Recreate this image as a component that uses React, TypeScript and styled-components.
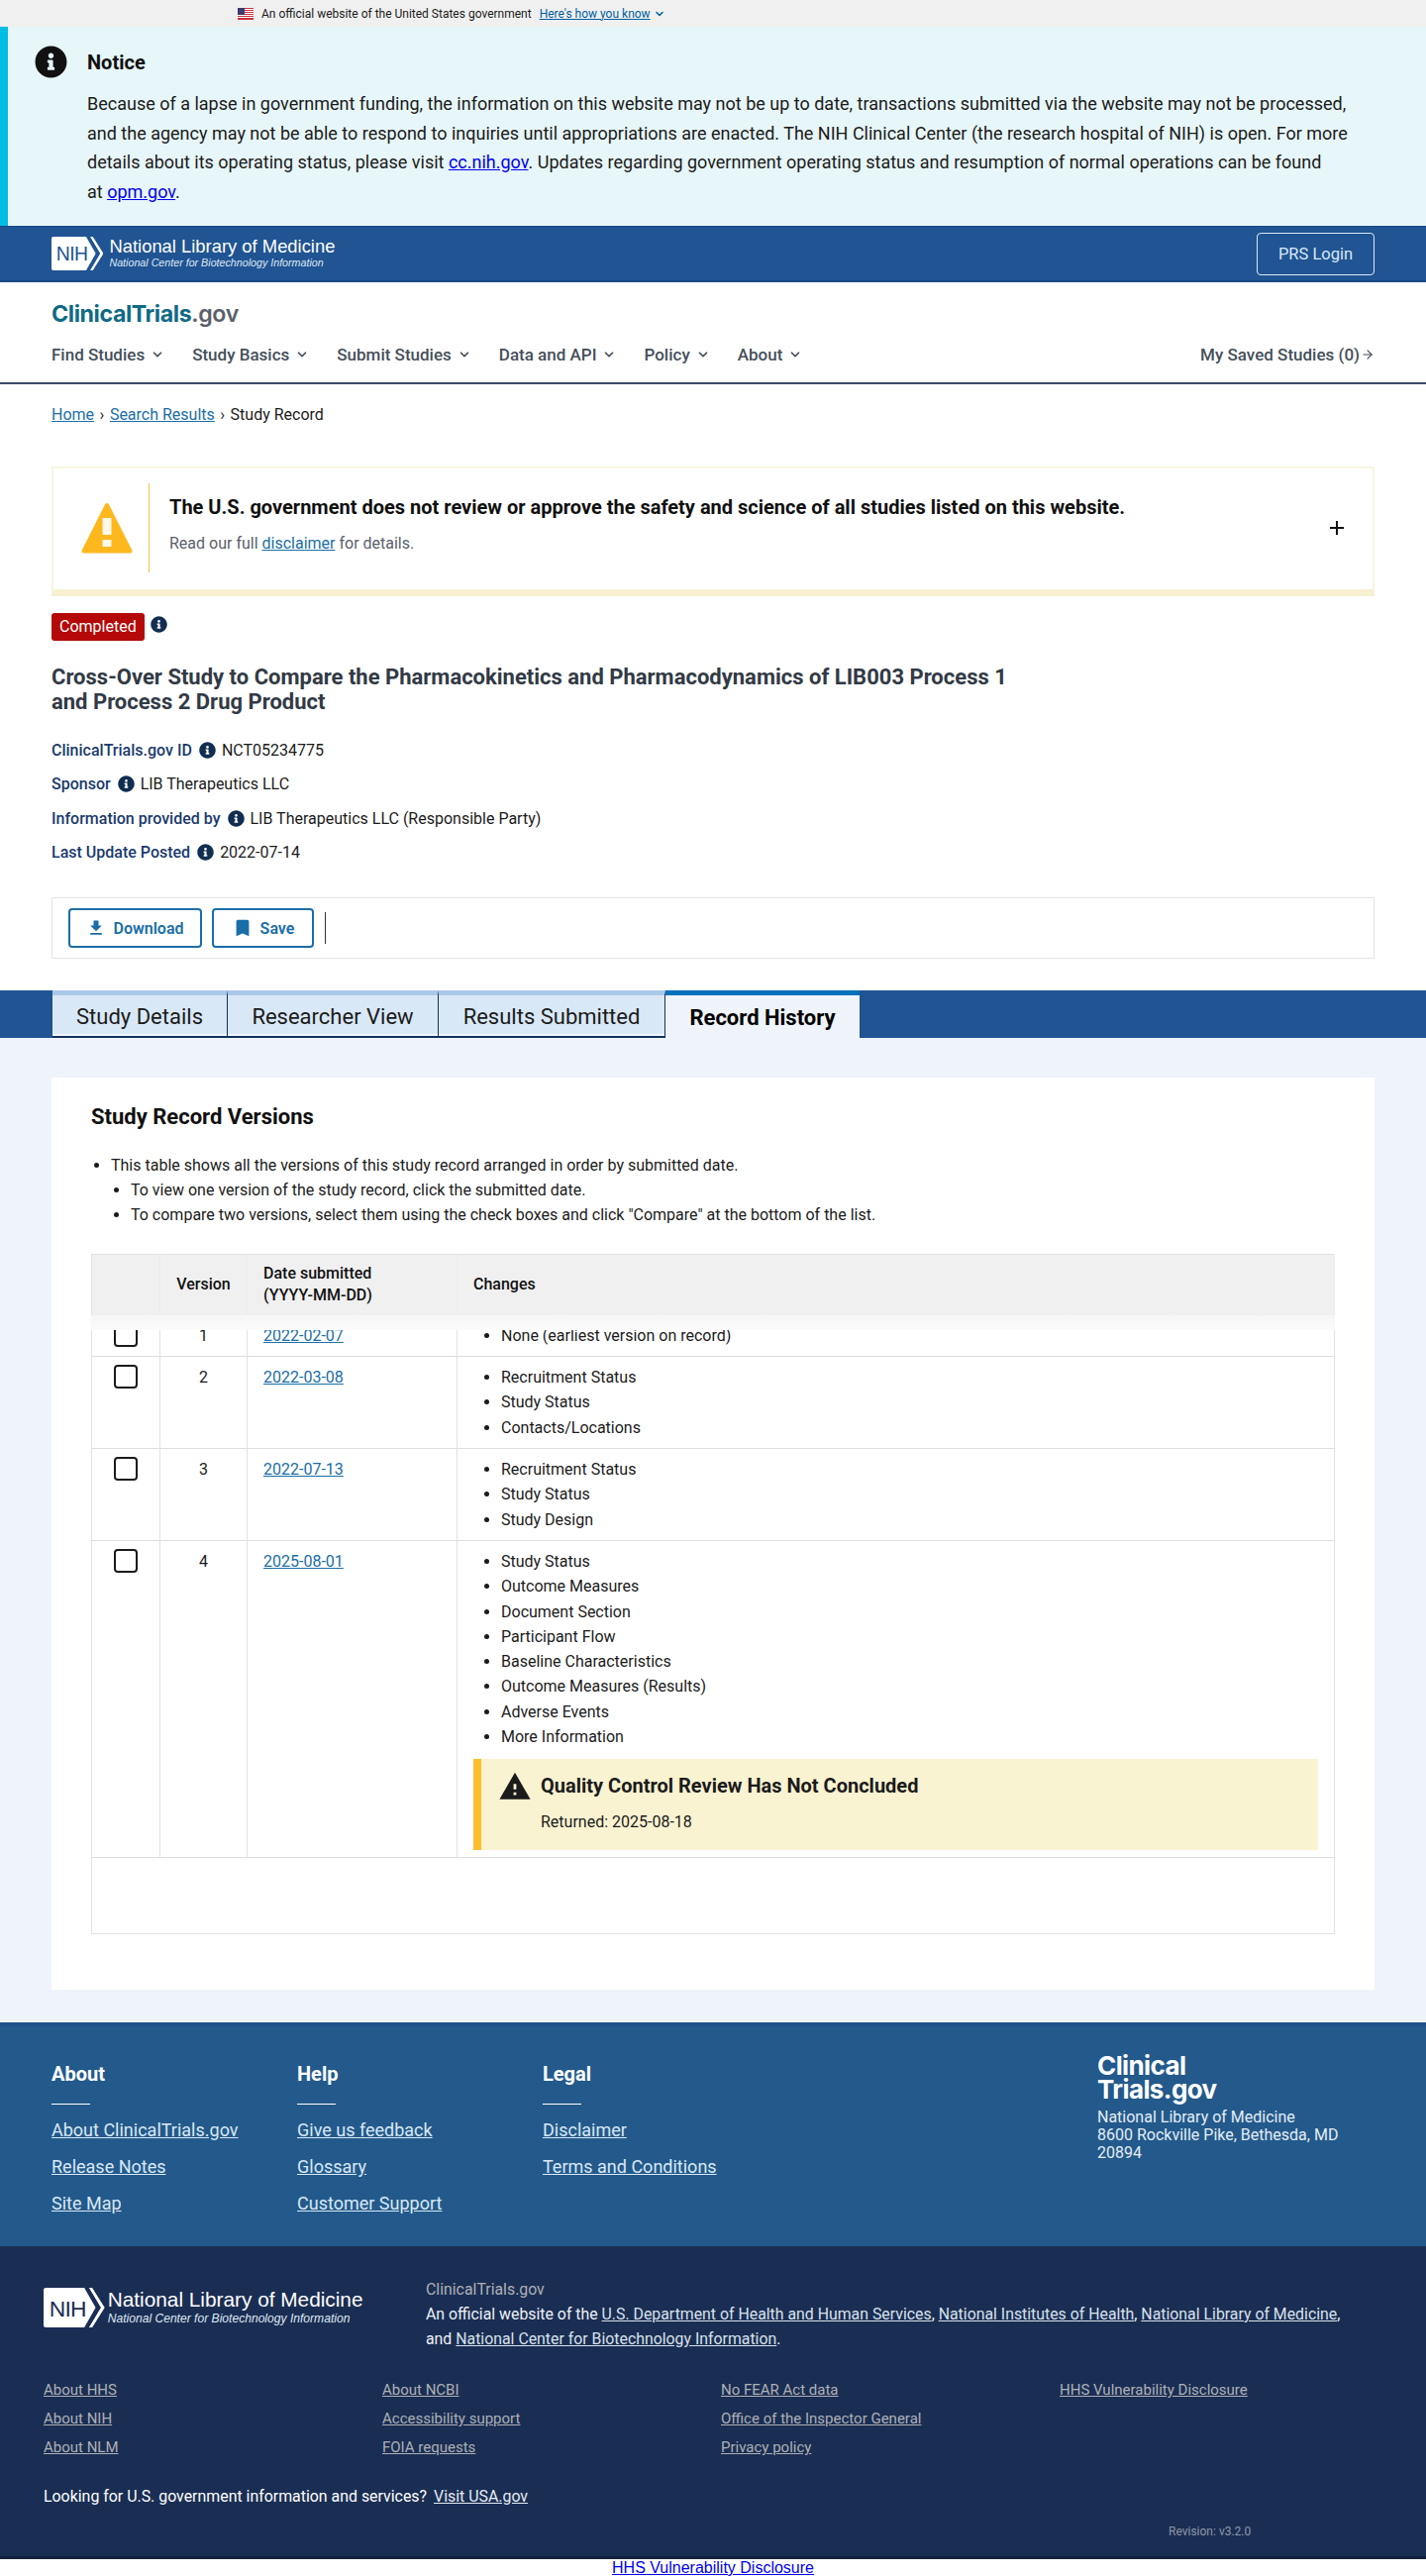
import React from "react";
import styled, { createGlobalStyle } from "styled-components";
import { FaInfoCircle } from "react-icons/fa";
import { MdFileDownload, MdBookmark, MdWarning, MdAdd } from "react-icons/md";
import { ArrowRight, ChevronDown } from "lucide-react";

const GlobalStyle = createGlobalStyle`
  html, body {
    margin: 0;
    padding: 0;
    background: #fff;
    font-family: Roboto, "Liberation Sans", sans-serif;
    font-size: 16px;
    color: #1b1b1b;
  }
  * { box-sizing: border-box; }
`;

const GovBanner = styled.div`
  height: 27px;
  background: #f0f0f0;
  padding-left: 240px;
  display: flex;
  align-items: center;
  gap: 8px;
  font-size: 12px;
  color: #1b1b1b;
`;

const GovLink = styled.a`
  color: #005ea2;
  text-decoration: underline;
  display: inline-flex;
  align-items: center;
  gap: 3px;
  text-underline-offset: 1px;
`;

const Notice = styled.section`
  height: 201px;
  background: #e7f6f8;
  border-left: 8px solid #00bde3;
  padding: 19px 70px 0 27px;
  display: flex;
  gap: 20px;
`;

const NoticeIcon = styled(FaInfoCircle)`
  width: 33px;
  height: 33px;
  flex: none;
  color: #111;
`;

const NoticeTitle = styled.h4`
  margin: 5px 0 15px;
  font-size: 20px;
  line-height: 24px;
  font-weight: 700;
  color: #111;
`;

const NoticeText = styled.p`
  margin: 0;
  width: 1290px;
  font-size: 18px;
  line-height: 29.7px;
  color: #1b1b1b;
`;

const PlainLink = styled.a`
  color: #0000ee;
  text-decoration: underline;
`;

const NlmBar = styled.div`
  height: 57px;
  background: #205493;
  border-top: 1px solid #174a85;
  border-bottom: 2px solid #174a85;
  padding: 0 52px;
  display: flex;
  align-items: center;
  justify-content: space-between;
`;

const NlmBrand = styled.div<{ $gap: number }>`
  display: flex;
  align-items: center;
  gap: ${({ $gap }) => $gap}px;
  color: #fff;
`;

const NlmNames = styled.div`
  display: flex;
  flex-direction: column;
  font-family: "Liberation Sans", Arial, sans-serif;
`;

const NlmName = styled.span<{ $size: number }>`
  font-size: ${({ $size }) => $size}px;
  line-height: ${({ $size }) => $size + 2}px;
  white-space: nowrap;
`;

const NlmSub = styled.span<{ $size: number }>`
  font-size: ${({ $size }) => $size}px;
  line-height: ${({ $size }) => $size + 3}px;
  font-style: italic;
  white-space: nowrap;
  color: #dfe8f3;
`;

const LoginButton = styled.a`
  width: 119px;
  height: 43px;
  border: 1px solid #d9e8f6;
  border-radius: 4px;
  display: flex;
  align-items: center;
  justify-content: center;
  color: #d9e8f6;
  font-size: 16.5px;
`;

const SiteHeader = styled.header`
  height: 103px;
  padding: 0 52px;
  border-bottom: 2px solid #3a4a63;
  display: flex;
  flex-direction: column;
`;

const SiteLogo = styled.div`
  margin-top: 18px;
  height: 28px;
  font-family: Inter, "Open Sans", sans-serif;
  font-size: 23.2px;
  line-height: 28px;
  font-weight: 700;
  letter-spacing: -0.4px;
  color: #0f6a85;
`;

const LogoGov = styled.span`
  color: #5b616b;
  font-weight: 600;
`;

const NavRow = styled.nav`
  margin-top: 15px;
  display: flex;
  align-items: center;
  justify-content: space-between;
`;

const NavList = styled.div`
  display: flex;
  gap: 28px;
`;

const NavItem = styled.a<{ $gap: number }>`
  display: inline-flex;
  align-items: center;
  gap: ${({ $gap }) => $gap}px;
  font-size: 17px;
  line-height: 24px;
  font-weight: 500;
  color: #454f5b;
`;

const Main = styled.main`
  padding: 19px 52px 32px;
`;

const Crumbs = styled.div`
  display: flex;
  align-items: center;
  gap: 5.5px;
  font-size: 16px;
  line-height: 24px;
  color: #1b1b1b;
`;

const BlueLink = styled.a`
  color: #1a6ea8;
  text-decoration: underline;
`;

const Disclaimer = styled.div`
  margin-top: 40px;
  height: 131px;
  border: 2px solid #f8f5e0;
  border-bottom: 7px solid #f7f1d2;
  display: flex;
  align-items: center;
  padding: 0 24px 2px 28px;
`;

const DisclaimerBody = styled.div`
  flex: 1;
  margin-left: 16px;
  height: 90px;
  border-left: 1px solid #f0c14b;
  padding: 10px 0 0 20px;
`;

const DisclaimerTitle = styled.div`
  font-size: 20px;
  line-height: 28px;
  font-weight: 700;
  color: #111;
`;

const DisclaimerText = styled.div`
  margin-top: 11px;
  font-size: 16px;
  line-height: 24px;
  color: #5b616b;
`;

const PlusIcon = styled(MdAdd)`
  width: 24px;
  height: 24px;
  color: #111;
  flex: none;
`;

const StatusRow = styled.div`
  margin-top: 17px;
  display: flex;
  align-items: flex-start;
  gap: 6px;
`;

const StatusBadge = styled.span`
  height: 28px;
  padding: 0 8px;
  border-radius: 3px;
  background: #b50909;
  color: #fff;
  font-size: 16px;
  line-height: 27px;
`;

const InfoDot = styled(FaInfoCircle)<{ $raise?: number }>`
  width: 17px;
  height: 17px;
  color: #112e51;
  flex: none;
  margin-top: ${({ $raise }) => $raise ?? 0}px;
`;

const StudyTitle = styled.h1`
  margin: 24px 0 0;
  width: 1000px;
  font-size: 22px;
  line-height: 25px;
  font-weight: 700;
  color: #323a45;
`;

const MetaList = styled.div`
  margin-top: 19px;
`;

const MetaRow = styled.div`
  height: 34.5px;
  display: flex;
  align-items: center;
  gap: 6px;
  font-size: 16px;
`;

const MetaLabel = styled.span`
  font-weight: 500;
  color: #1a3a6e;
  margin-right: 1px;
`;

const ActionsCard = styled.div`
  margin-top: 28px;
  height: 62px;
  border: 1px solid #e4e4e4;
  display: flex;
  align-items: center;
  gap: 10px;
  padding: 0 0 0 16px;
`;

const ActionButton = styled.a<{ $width: number }>`
  width: ${({ $width }) => $width}px;
  height: 40px;
  border: 2px solid #1a6ea8;
  border-radius: 4px;
  display: flex;
  align-items: center;
  justify-content: center;
  gap: 7px;
  font-size: 16px;
  font-weight: 600;
  color: #1a6ea8;
`;

const ActionDivider = styled.span`
  width: 1px;
  height: 32px;
  margin-left: 1px;
  background: #333;
`;

const TabBand = styled.div`
  height: 48px;
  background: #205493;
  padding-left: 53px;
  display: flex;
`;

const Tab = styled.a<{ $active?: boolean; $width: number }>`
  width: ${({ $width }) => $width}px;
  height: 48px;
  display: flex;
  align-items: center;
  justify-content: center;
  font-size: 22px;
  padding-top: 1px;
  font-weight: ${({ $active }) => ($active ? 700 : 400)};
  color: ${({ $active }) => ($active ? "#000" : "#1b1b1b")};
  background: ${({ $active }) => ($active ? "#eef4fa" : "#d9e8f6")};
  border-top: 5px solid ${({ $active }) => ($active ? "#0071bc" : "#aac8e8")};
  border-right: ${({ $active }) => ($active ? "0" : "1px solid #12335f")};
  border-bottom: ${({ $active }) => ($active ? "0" : "2px solid #12335f")};
  box-shadow: ${({ $active }) => ($active ? "none" : "inset 0 -2px 0 #f0f6fc")};
`;

const ContentArea = styled.div`
  background: #eef4fa;
  padding: 40px 52px 33px;
`;

const RecordCard = styled.section`
  background: #fff;
  padding: 24px 40px 56px;
`;

const RecordTitle = styled.h2`
  margin: 0 0 20px;
  font-size: 22px;
  line-height: 32px;
  font-weight: 700;
  color: #111;
`;

const HelpList = styled.ul`
  margin: 0 0 27px;
  padding-left: 20px;
  font-size: 16px;
  line-height: 25px;
`;

const HelpSubList = styled.ul`
  margin: 0;
  padding-left: 20px;
  list-style: disc;
`;

const VersionsTable = styled.table`
  width: 1256px;
  table-layout: fixed;
  border-collapse: collapse;
  border: 1px solid #e2e2e2;
  font-size: 16px;
`;

const HeadRow = styled.tr`
  height: 61px;
  background: #f0f0f0;
`;

const HeadCell = styled.th<{ $center?: boolean }>`
  position: relative;
  padding: 0 16px;
  font-size: 16px;
  line-height: 22px;
  font-weight: 500;
  color: #111;
  text-align: ${({ $center }) => ($center ? "center" : "left")};
  border-right: 1px solid #ececec;
`;

const HeadFade = styled.span`
  position: absolute;
  left: -1px;
  top: 100%;
  width: 1256px;
  height: 15px;
  background: linear-gradient(#f5f5f5, #fcfcfc);
  z-index: 1;
`;

const Row = styled.tr<{ $height: number }>`
  height: ${({ $height }) => $height}px;
  border-bottom: 1px solid #ddd;
`;

const Cell = styled.td<{ $center?: boolean }>`
  vertical-align: top;
  padding: 8px 16px 0;
  line-height: 25.3px;
  text-align: ${({ $center }) => ($center ? "center" : "left")};
  border-right: 1px solid #e2e2e2;
`;

const CheckCell = styled.td`
  vertical-align: top;
  padding: 8px 0 0 22px;
  border-right: 1px solid #e2e2e2;
`;

const CheckBox = styled.span`
  display: block;
  width: 24px;
  height: 24px;
  border: 2px solid #1b1b1b;
  border-radius: 4px;
`;

const SpacerRow = styled.tr`
  height: 77px;
`;

const ChangeList = styled.ul`
  margin: 0;
  padding-left: 28px;
  line-height: 25.3px;
`;

const QcAlert = styled.div`
  margin-top: 9.5px;
  height: 92px;
  background: #faf3d1;
  border-left: 8px solid #ffbe2e;
  padding: 10px 0 0 19px;
`;

const QcHead = styled.div`
  display: flex;
  align-items: center;
  gap: 9px;
  height: 36px;
  font-size: 20px;
  font-weight: 700;
  color: #1b1b1b;
`;

const QcIcon = styled(MdWarning)`
  width: 34px;
  height: 34px;
  margin-left: -2px;
  color: #1b1b1b;
`;

const QcText = styled.div`
  margin-top: 6px;
  margin-left: 41px;
  font-size: 16px;
  line-height: 24px;
`;

const FooterTop = styled.section`
  height: 226px;
  background: #235a8b;
  border-top: 4px solid #1f5088;
  padding: 35px 52px 0;
  display: flex;
  justify-content: space-between;
`;

const FooterColumns = styled.div`
  display: flex;
`;

const FooterColumn = styled.div`
  width: 248px;
  display: flex;
  flex-direction: column;
  align-items: flex-start;
`;

const FooterHeading = styled.h3`
  margin: 0;
  font-size: 20px;
  line-height: 26px;
  font-weight: 700;
  color: #fff;
`;

const FooterRule = styled.span`
  width: 39px;
  height: 1px;
  margin: 17px 0 7px;
  background: #fff;
`;

const FooterLink = styled.a`
  font-size: 18px;
  line-height: 37.2px;
  color: #d9e8f6;
  text-decoration: underline;
`;

const FooterAddress = styled.div`
  width: 280px;
  margin-top: -7px;
`;

const FooterLogo = styled.div`
  font-family: Inter, "Open Sans", sans-serif;
  font-size: 26px;
  line-height: 24px;
  font-weight: 700;
  letter-spacing: -0.6px;
  color: #fff;
`;

const AddressText = styled.div`
  margin-top: 7px;
  font-size: 16px;
  line-height: 18px;
  color: #e4edf6;
`;

const FooterBottom = styled.section`
  height: 316px;
  background: #1a2e54;
  border-bottom: 3px solid #12213f;
  padding: 0 44px;
`;

const AgencyRow = styled.div`
  display: flex;
  padding-top: 31px;
`;

const AgencyLogoWrap = styled.div`
  width: 386px;
  padding-top: 11px;
  flex: none;
`;

const AgencyText = styled.div`
  width: 940px;
  font-size: 15.85px;
  line-height: 25px;
  color: #eef1f5;
`;

const AgencyName = styled.div`
  color: #aeb0b5;
`;

const AgencyLink = styled.a`
  color: #d9e1ea;
  text-decoration: underline;
`;

const SmallLinks = styled.div`
  margin-top: 25px;
  display: grid;
  grid-template-columns: repeat(4, 342px);
  grid-auto-flow: column;
  grid-template-rows: repeat(3, 29px);
`;

const SmallLink = styled.a`
  justify-self: start;
  font-size: 15px;
  line-height: 29px;
  color: #aeb0b5;
  text-decoration: underline;
`;

const UsaLine = styled.div`
  margin-top: 23px;
  font-size: 15.9px;
  line-height: 24px;
  color: #fff;
`;

const UsaLink = styled.a`
  margin-left: 3px;
  color: #e6ebf2;
  text-decoration: underline;
`;

const Revision = styled.div`
  margin-top: 16px;
  padding-left: 1136px;
  font-size: 12px;
  line-height: 14px;
  color: #8f97a6;
`;

const BottomLink = styled.div`
  height: 18px;
  text-align: center;
  font-family: "Liberation Sans", Arial, sans-serif;
  font-size: 16px;
  line-height: 18px;
`;

const Flag = () => (
  <svg width="16" height="12" viewBox="0 0 16 12" aria-hidden="true">
    <rect width="16" height="12" fill="#fff" />
    {[0, 2, 4, 6, 8, 10].map((y) => (
      <rect key={y} y={y} width="16" height="1" fill="#c8313e" />
    ))}
    <rect y="11" width="16" height="1" fill="#c8313e" />
    <rect width="7" height="7" fill="#3c3b6e" />
  </svg>
);

const NihLogo = ({ height, fill }: { height: number; fill: string }) => (
  <svg height={height} viewBox="0 0 54 35" aria-hidden="true">
    <path d="M2 0H38L48 17.5 38 35H2Q0 35 0 33V2Q0 0 2 0Z" fill="#fff" />
    <path d="M40 0H43L54 17.5 43 35H40L50.5 17.5Z" fill="#fff" />
    <path d="M36 0H40L50.5 17.5 40 35H36L46 17.5Z" fill={fill} />
    <text x="5" y="25" fontFamily="Liberation Sans, Arial, sans-serif" fontSize="20" fill={fill} textLength="33">
      NIH
    </text>
  </svg>
);

const CautionIcon = () => (
  <svg width="52" height="52" viewBox="0 0 52 52" aria-hidden="true" style={{ flex: "none" }}>
    <path d="M26 3 L49.5 49.5 H2.5 Z" fill="#fdb81e" stroke="#fdb81e" strokeWidth="4" strokeLinejoin="round" />
    <rect x="21.5" y="16" width="9" height="17" fill="#fff8e8" />
    <rect x="21.5" y="38" width="9" height="7" fill="#fff8e8" />
  </svg>
);

const navItems = ["Find Studies", "Study Basics", "Submit Studies", "Data and API", "Policy", "About"];

const rows = [
  { version: 1, date: "2022-02-07", height: 42, changes: ["None (earliest version on record)"] },
  { version: 2, date: "2022-03-08", height: 93, changes: ["Recruitment Status", "Study Status", "Contacts/Locations"] },
  { version: 3, date: "2022-07-13", height: 93, changes: ["Recruitment Status", "Study Status", "Study Design"] },
  {
    version: 4,
    date: "2025-08-01",
    height: 320,
    changes: [
      "Study Status",
      "Outcome Measures",
      "Document Section",
      "Participant Flow",
      "Baseline Characteristics",
      "Outcome Measures (Results)",
      "Adverse Events",
      "More Information",
    ],
  },
];

const footerColumns = [
  { title: "About", links: ["About ClinicalTrials.gov", "Release Notes", "Site Map"] },
  { title: "Help", links: ["Give us feedback", "Glossary", "Customer Support"] },
  { title: "Legal", links: ["Disclaimer", "Terms and Conditions"] },
];

const smallLinks = [
  "About HHS",
  "About NIH",
  "About NLM",
  "About NCBI",
  "Accessibility support",
  "FOIA requests",
  "No FEAR Act data",
  "Office of the Inspector General",
  "Privacy policy",
  "HHS Vulnerability Disclosure",
];

export default function App() {
  return (
    <>
      <GlobalStyle />
      <GovBanner>
        <Flag />
        <span>An official website of the United States government</span>
        <GovLink>
          Here's how you know
          <ChevronDown size={12} strokeWidth={3} />
        </GovLink>
      </GovBanner>

      <Notice>
        <NoticeIcon />
        <div>
          <NoticeTitle>Notice</NoticeTitle>
          <NoticeText>
            Because of a lapse in government funding, the information on this website may not be up to date,
            transactions submitted via the website may not be processed, and the agency may not be able to respond to
            inquiries until appropriations are enacted. The NIH Clinical Center (the research hospital of NIH) is open.
            For more details about its operating status, please visit <PlainLink>cc.nih.gov</PlainLink>. Updates
            regarding government operating status and resumption of normal operations can be found at{"\u00a0"}
            <PlainLink>opm.gov</PlainLink>.
          </NoticeText>
        </div>
      </Notice>

      <NlmBar>
        <NlmBrand $gap={6}>
          <NihLogo height={34} fill="#205493" />
          <NlmNames>
            <NlmName $size={18.4}>National Library of Medicine</NlmName>
            <NlmSub $size={10.7}>National Center for Biotechnology Information</NlmSub>
          </NlmNames>
        </NlmBrand>
        <LoginButton>PRS Login</LoginButton>
      </NlmBar>

      <SiteHeader>
        <SiteLogo>
          ClinicalTrials<LogoGov>.gov</LogoGov>
        </SiteLogo>
        <NavRow>
          <NavList>
            {navItems.map((item) => (
              <NavItem key={item} $gap={6}>
                {item}
                <ChevronDown size={14} strokeWidth={3} />
              </NavItem>
            ))}
          </NavList>
          <NavItem $gap={1}>
            My Saved Studies (0)
            <ArrowRight size={14} />
          </NavItem>
        </NavRow>
      </SiteHeader>

      <Main>
        <Crumbs>
          <BlueLink>Home</BlueLink>
          <span>›</span>
          <BlueLink>Search Results</BlueLink>
          <span>›</span>
          <span>Study Record</span>
        </Crumbs>

        <Disclaimer>
          <CautionIcon />
          <DisclaimerBody>
            <DisclaimerTitle>
              The U.S. government does not review or approve the safety and science of all studies listed on this
              website.
            </DisclaimerTitle>
            <DisclaimerText>
              Read our full <BlueLink>disclaimer</BlueLink> for details.
            </DisclaimerText>
          </DisclaimerBody>
          <PlusIcon />
        </Disclaimer>

        <StatusRow>
          <StatusBadge>Completed</StatusBadge>
          <InfoDot $raise={3} />
        </StatusRow>

        <StudyTitle>
          Cross-Over Study to Compare the Pharmacokinetics and Pharmacodynamics of LIB003 Process 1 and Process 2 Drug
          Product
        </StudyTitle>

        <MetaList>
          <MetaRow>
            <MetaLabel>ClinicalTrials.gov ID</MetaLabel>
            <InfoDot />
            <span>NCT05234775</span>
          </MetaRow>
          <MetaRow>
            <MetaLabel>Sponsor</MetaLabel>
            <InfoDot />
            <span>LIB Therapeutics LLC</span>
          </MetaRow>
          <MetaRow>
            <MetaLabel>Information provided by</MetaLabel>
            <InfoDot />
            <span>LIB Therapeutics LLC (Responsible Party)</span>
          </MetaRow>
          <MetaRow>
            <MetaLabel>Last Update Posted</MetaLabel>
            <InfoDot />
            <span>2022-07-14</span>
          </MetaRow>
        </MetaList>

        <ActionsCard>
          <ActionButton $width={135}>
            <MdFileDownload size={20} />
            Download
          </ActionButton>
          <ActionButton $width={103}>
            <MdBookmark size={22} />
            Save
          </ActionButton>
          <ActionDivider />
        </ActionsCard>
      </Main>

      <TabBand>
        <Tab $width={177}>Study Details</Tab>
        <Tab $width={213}>Researcher View</Tab>
        <Tab $width={229}>Results Submitted</Tab>
        <Tab $active $width={196}>
          Record History
        </Tab>
      </TabBand>

      <ContentArea>
        <RecordCard>
          <RecordTitle>Study Record Versions</RecordTitle>
          <HelpList>
            <li>
              This table shows all the versions of this study record arranged in order by submitted date.
              <HelpSubList>
                <li>To view one version of the study record, click the submitted date.</li>
                <li>To compare two versions, select them using the check boxes and click "Compare" at the bottom of the list.</li>
              </HelpSubList>
            </li>
          </HelpList>

          <VersionsTable>
            <colgroup>
              <col style={{ width: 69 }} />
              <col style={{ width: 88 }} />
              <col style={{ width: 212 }} />
              <col />
            </colgroup>
            <thead>
              <HeadRow>
                <HeadCell>
                  <HeadFade />
                </HeadCell>
                <HeadCell $center>Version</HeadCell>
                <HeadCell>
                  Date submitted
                  <br />
                  (YYYY-MM-DD)
                </HeadCell>
                <HeadCell>Changes</HeadCell>
              </HeadRow>
            </thead>
            <tbody>
              {rows.map((row) => (
                <Row key={row.version} $height={row.height}>
                  <CheckCell>
                    <CheckBox />
                  </CheckCell>
                  <Cell $center>{row.version}</Cell>
                  <Cell>
                    <BlueLink>{row.date}</BlueLink>
                  </Cell>
                  <Cell>
                    <ChangeList>
                      {row.changes.map((change) => (
                        <li key={change}>{change}</li>
                      ))}
                    </ChangeList>
                    {row.version === 4 && (
                      <QcAlert>
                        <QcHead>
                          <QcIcon />
                          Quality Control Review Has Not Concluded
                        </QcHead>
                        <QcText>Returned: 2025-08-18</QcText>
                      </QcAlert>
                    )}
                  </Cell>
                </Row>
              ))}
              <SpacerRow>
                <td colSpan={4} />
              </SpacerRow>
            </tbody>
          </VersionsTable>
        </RecordCard>
      </ContentArea>

      <FooterTop>
        <FooterColumns>
          {footerColumns.map((column) => (
            <FooterColumn key={column.title}>
              <FooterHeading>{column.title}</FooterHeading>
              <FooterRule />
              {column.links.map((link) => (
                <FooterLink key={link}>{link}</FooterLink>
              ))}
            </FooterColumn>
          ))}
        </FooterColumns>
        <FooterAddress>
          <FooterLogo>
            Clinical
            <br />
            Trials.gov
          </FooterLogo>
          <AddressText>
            National Library of Medicine
            <br />
            8600 Rockville Pike, Bethesda, MD
            <br />
            20894
          </AddressText>
        </FooterAddress>
      </FooterTop>

      <FooterBottom>
        <AgencyRow>
          <AgencyLogoWrap>
            <NlmBrand $gap={3}>
              <NihLogo height={40} fill="#1a2e54" />
              <NlmNames>
                <NlmName $size={20.8}>National Library of Medicine</NlmName>
                <NlmSub $size={12.1}>National Center for Biotechnology Information</NlmSub>
              </NlmNames>
            </NlmBrand>
          </AgencyLogoWrap>
          <AgencyText>
            <AgencyName>ClinicalTrials.gov</AgencyName>
            An official website of the <AgencyLink>U.S. Department of Health and Human Services</AgencyLink>,{" "}
            <AgencyLink>National Institutes of Health</AgencyLink>, <AgencyLink>National Library of Medicine</AgencyLink>,
            and <AgencyLink>National Center for Biotechnology Information</AgencyLink>.
          </AgencyText>
        </AgencyRow>

        <SmallLinks>
          {smallLinks.map((link) => (
            <SmallLink key={link}>{link}</SmallLink>
          ))}
        </SmallLinks>

        <UsaLine>
          Looking for U.S. government information and services? <UsaLink>Visit USA.gov</UsaLink>
        </UsaLine>
        <Revision>Revision: v3.2.0</Revision>
      </FooterBottom>

      <BottomLink>
        <PlainLink>HHS Vulnerability Disclosure</PlainLink>
      </BottomLink>
    </>
  );
}
